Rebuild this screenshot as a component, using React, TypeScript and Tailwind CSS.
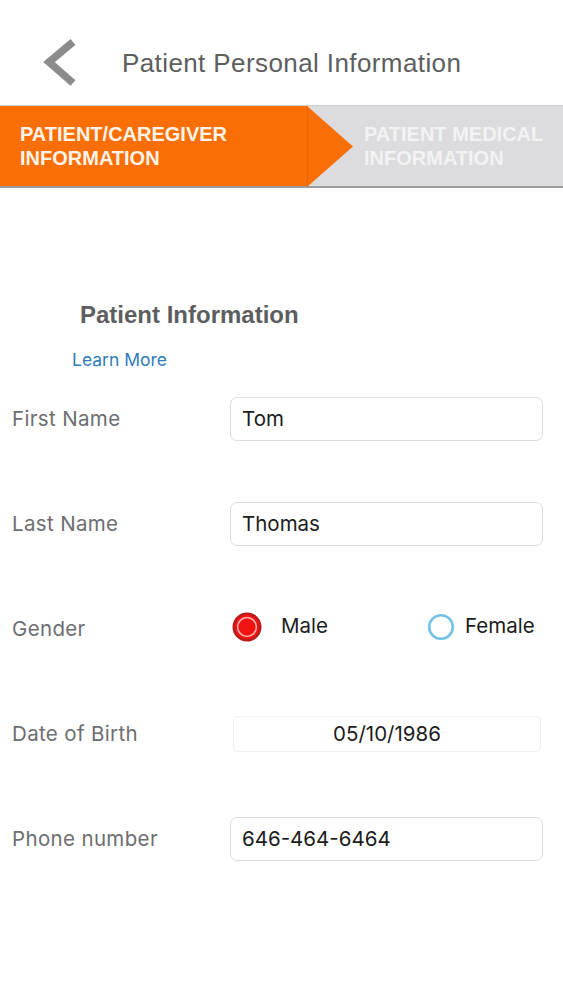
import React from "react";

const sf = { fontFamily: "Inter, 'Liberation Sans', sans-serif" };

function Row({ label, children }: { label: string; children: React.ReactNode }) {
  return (
    <div className="flex h-[44px] items-center">
      <div className="w-[230px] shrink-0 pl-[12px] text-[20.5px] tracking-[0.35px] text-[#6d6e71]" style={sf}>
        {label}
      </div>
      {children}
    </div>
  );
}

function Field({ value }: { value: string }) {
  return (
    <div
      className="flex h-[44px] w-[313px] items-center rounded-[7px] border border-[#dcdcdc] bg-white pl-[11px] text-[20.5px] text-[#1c1c1c]"
      style={sf}
    >
      {value}
    </div>
  );
}

export default function App() {
  return (
    <div className="min-h-[1000px] w-[563px] bg-white" style={{ fontFamily: "'Liberation Sans', Arial, sans-serif" }}>
      {/* Header */}
      <div className="h-[105px] pt-[41px]">
        <div className="flex h-[44px] items-center">
          <svg width="122" height="48" viewBox="0 0 122 48" className="shrink-0">
            <polyline
              points="73,3 49,23 73,44"
              fill="none"
              stroke="#8b8b8b"
              strokeWidth="7.5"
              strokeLinecap="butt"
              strokeLinejoin="miter"
            />
          </svg>
          <div className="text-[26px] tracking-[0.4px] text-[#5d5e60]">Patient Personal Information</div>
        </div>
      </div>

      {/* Progress banner */}
      <div className="relative flex h-[83px] border-t border-[#cfcfcf] border-b-2 border-b-[#9c9c9c] bg-[#dcdcde]">
        <div className="flex w-[307px] flex-col justify-center bg-[#f96f06] pl-[20px] text-[20px] font-bold leading-[24px] text-[#fff3ea]">
          <span>PATIENT/CAREGIVER</span>
          <span>INFORMATION</span>
        </div>
        <svg width="46" height="81" viewBox="0 0 46 81" className="shrink-0" preserveAspectRatio="none">
          <polygon points="0,0 46,40.5 0,81" fill="#f96f06" />
          <line x1="0.5" y1="0" x2="0.5" y2="81" stroke="#e8660a" strokeWidth="1" />
        </svg>
        <div className="ml-[11px] flex flex-col justify-center text-[20px] font-bold leading-[24px] text-[#f3f3f4]">
          <span>PATIENT MEDICAL</span>
          <span>INFORMATION</span>
        </div>
      </div>

      {/* Section title */}
      <div className="mt-[113px] pl-[80px] text-[24px] font-bold leading-[28px] text-[#5d5e60]">
        Patient Information
      </div>
      <div className="mt-[20px] pl-[72px] text-[17.5px] leading-[22px] text-[#2f7dbb]" style={sf}>
        Learn More
      </div>

      {/* Form */}
      <div className="mt-[26px] flex flex-col gap-[61px]">
        <Row label="First Name">
          <Field value="Tom" />
        </Row>
        <Row label="Last Name">
          <Field value="Thomas" />
        </Row>
        <Row label="Gender">
          <div className="mb-[5px] flex items-center" style={sf}>
            <div className="ml-[2px] flex items-center">
              <svg width="30" height="30" viewBox="0 0 30 30">
                <circle cx="15" cy="15" r="13.4" fill="#f21212" stroke="#bb1a1a" strokeWidth="2.2" />
                <circle cx="15" cy="15" r="9.4" fill="#f21212" stroke="#ffb4b4" strokeWidth="1.5" />
              </svg>
              <span className="ml-[19px] text-[20.5px] text-[#1c1c1c]">Male</span>
            </div>
            <div className="ml-[99px] flex items-center">
              <svg width="28" height="28" viewBox="0 0 28 28">
                <circle cx="14" cy="14" r="11.8" fill="#ffffff" stroke="#72c3e6" strokeWidth="2.6" />
              </svg>
              <span className="ml-[10px] text-[20.5px] text-[#1c1c1c]">Female</span>
            </div>
          </div>
        </Row>
        <Row label="Date of Birth">
          <div
            className="ml-[3px] flex h-[36px] w-[308px] items-center justify-center rounded-[5px] border border-[#efefef] bg-white text-[20.5px] text-[#1c1c1c]"
            style={sf}
          >
            05/10/1986
          </div>
        </Row>
        <Row label="Phone number">
          <Field value="646-464-6464" />
        </Row>
      </div>
    </div>
  );
}
